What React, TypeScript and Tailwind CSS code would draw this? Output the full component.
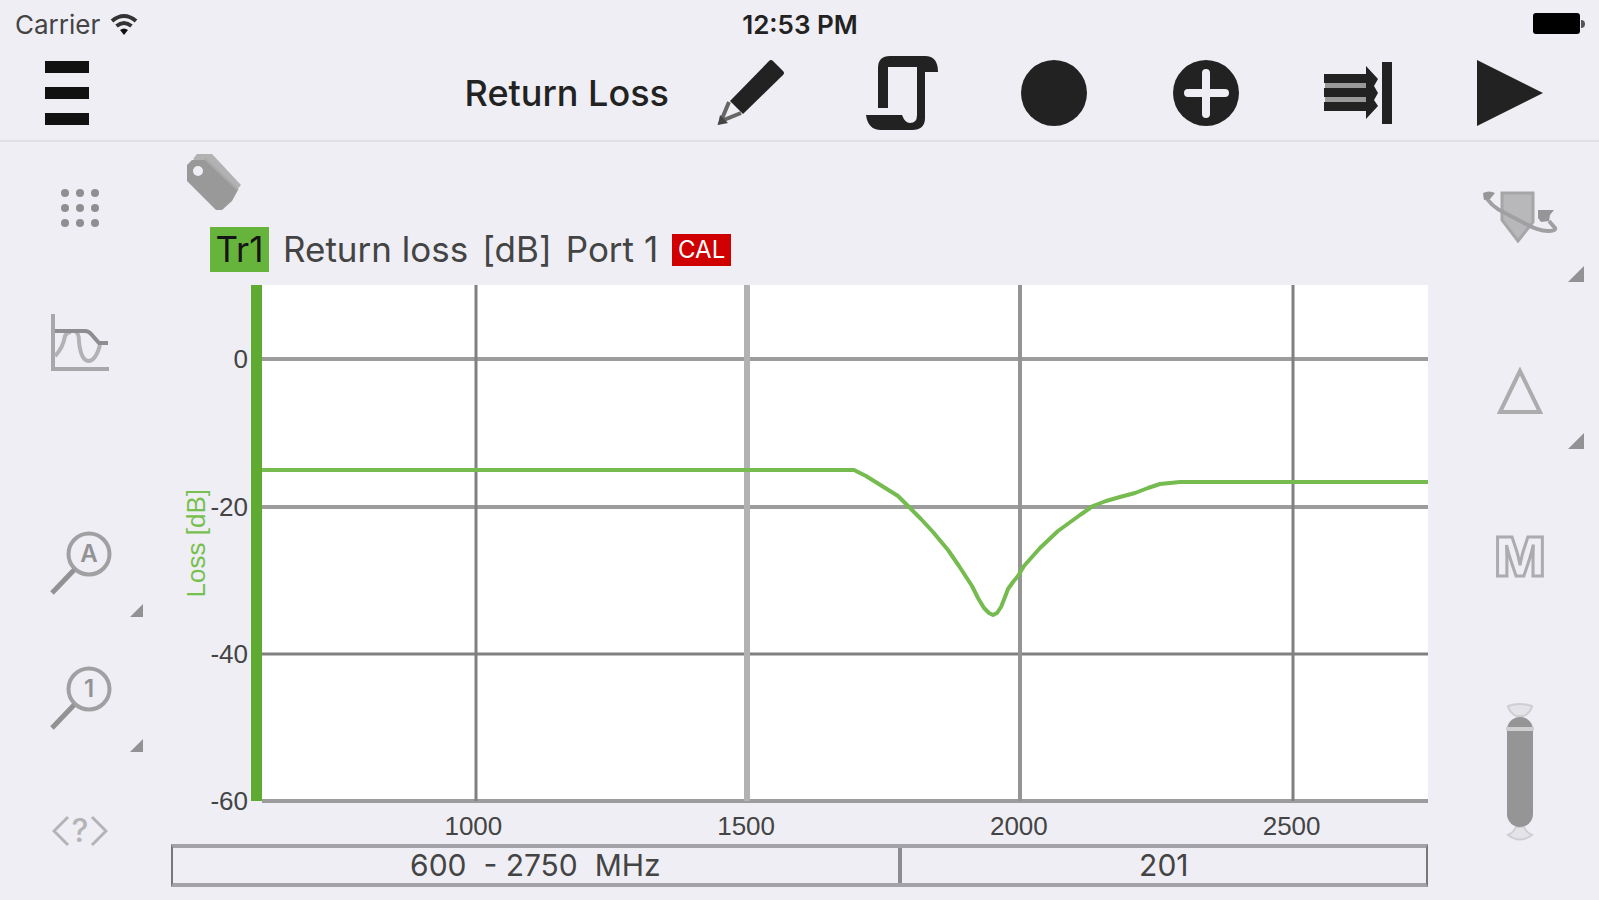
import type { ReactNode } from 'react'

const yTicks = ['0', '-20', '-40', '-60']
const xTicks = ['1000', '1500', '2000', '2500']

const trace =
  '0,185 592,185 604,191 620,201 636,211 646,221 659,234 671,247 686,265 697,281 710,301 716,313 722,323 727,328 731,330 735,328 739,322 743,312 746,304 751,297 756,291 762,281 778,263 796,246 818,230 831,221 844,216 858,212 873,208 886,203 898,199 918,197 1166,197'

function ToolButton({ label, children }: { label: string; children: ReactNode }) {
  return (
    <button aria-label={label} className="flex h-20 w-[152px] items-center justify-center text-[#222]">
      {children}
    </button>
  )
}

function Corner({ className }: { className: string }) {
  return (
    <svg viewBox="0 0 16 16" className={className}>
      <path d="M16 0v16H0z" fill="#929294" />
    </svg>
  )
}

function StatusBar() {
  return (
    <div className="grid h-12 grid-cols-3 items-center pl-[15px] pr-[14px]">
      <div className="flex items-center gap-[10px] text-[26px] text-[#444]">
        <span>Carrier</span>
        <svg width="28" height="22" viewBox="0 0 28 22">
          <path d="M14 22l-4-5q4-3 8 0z" fill="#111" />
          <path d="M6.500 13q7.500-6 15 0M2 8q12-10 24 0" fill="none" stroke="#333" strokeWidth="4" />
        </svg>
      </div>
      <div className="text-center text-[26px] font-semibold text-[#222]">12:53 PM</div>
      <svg width="52" height="22" viewBox="0 0 52 22" className="justify-self-end">
        <rect width="47" height="21" rx="3" fill="#000" />
        <path d="M48 7q4 0 4 4t-4 4z" fill="#555" />
      </svg>
    </div>
  )
}

function Toolbar() {
  return (
    <header className="flex h-[94px] items-center justify-between border-b-2 border-[#e0dfe5] pb-[2px] pl-[45px] pr-[13px]">
      <button aria-label="Menu" className="flex flex-col gap-[14px]">
        <span className="h-3 w-11 bg-[#111]" />
        <span className="h-3 w-11 bg-[#111]" />
        <span className="h-3 w-11 bg-[#111]" />
      </button>
      <div className="flex items-center">
        <h1 className="mr-[5px] text-[36px] font-medium text-[#222]">Return Loss</h1>
        <ToolButton label="Edit">
          <svg width="68" height="68" viewBox="0 0 68 68">
            <path d="M14 42L53 2q2-2 4 0l10 10q2 2 0 4L27 55z" fill="currentColor" />
            <path d="M13 43L5 62l20-8" fill="none" stroke="#666" strokeWidth="4" />
            <path d="M4 56l-2 10 10-2z" fill="#444" />
          </svg>
        </ToolButton>
        <ToolButton label="Script">
          <svg width="74" height="76" viewBox="0 0 74 76">
            <path
              d="M13 53V13Q13 1 25 1H60Q73 1 73 17H60V63Q60 75 47 75H16Q3 75 1 60H37Q40 68 45 68Q52 68 52 60V12H23V53z"
              fill="currentColor"
            />
          </svg>
        </ToolButton>
        <ToolButton label="Record">
          <svg width="66" height="66" viewBox="0 0 66 66">
            <circle cx="33" cy="33" r="33" fill="currentColor" />
          </svg>
        </ToolButton>
        <ToolButton label="Add">
          <svg width="66" height="66" viewBox="0 0 66 66">
            <circle cx="33" cy="33" r="33" fill="currentColor" />
            <path d="M33 13v41M15 33h37" stroke="#efeef4" strokeWidth="8" strokeLinecap="round" />
          </svg>
        </ToolButton>
        <ToolButton label="Skip to end">
          <svg width="70" height="62" viewBox="0 0 70 62">
            <path d="M2 14h42v32H2z" fill="#999" />
            <path d="M1 12h42v9H1zM1 26h42v9H1zM1 40h42v9H1z" fill="currentColor" />
            <path d="M43 4l12 13-4 7 4 7-4 7 4 6-12 13z" fill="currentColor" />
            <path d="M59 0h10v62H59z" fill="currentColor" />
          </svg>
        </ToolButton>
        <ToolButton label="Run">
          <svg width="68" height="68" viewBox="0 0 68 68">
            <path d="M1 1l66 33L1 67z" fill="currentColor" />
          </svg>
        </ToolButton>
      </div>
    </header>
  )
}

function LeftRail() {
  return (
    <nav className="flex w-[171px] shrink-0 flex-col justify-between">
      <div className="flex flex-col">
        <button aria-label="Grid" className="flex h-[132px] items-center pl-[61px]">
          <svg width="38" height="38" viewBox="0 0 38 38" fill="#8f8f91">
            {[4, 19, 34].map((y) =>
              [4, 19, 34].map((x) => <circle key={`${x}-${y}`} cx={x} cy={y} r="4" />),
            )}
          </svg>
        </button>
        <button aria-label="Traces" className="flex h-[138px] items-center pl-[51px]">
          <svg width="58" height="58" viewBox="0 0 58 58" fill="none">
            <path d="M2 0v55h56" stroke="#a8a8aa" strokeWidth="4" />
            <path d="M4 42Q12 34 14 22Q16 18 20 18M24 18Q28 18 28 28Q30 47 38 47Q45 46 49 31" stroke="#b2b2b4" strokeWidth="4" />
            <path d="M4 17h30q4 0 7 4l7 8h9" stroke="#8e8e90" strokeWidth="4" />
          </svg>
        </button>
      </div>
      <div className="flex flex-col">
        {['A', '1'].map((mark) => (
          <button key={mark} aria-label={`Zoom ${mark}`} className="relative flex h-[135px] items-center pl-[50px]">
            <svg width="62" height="64" viewBox="0 0 62 64">
              <circle cx="39" cy="23" r="20.5" fill="none" stroke="#a0a0a2" strokeWidth="4" />
              <path d="M24 39L2 62" stroke="#929294" strokeWidth="5" />
              <text x="39" y="31" textAnchor="middle" fontSize="24" fontWeight="600" fill="#929294">
                {mark}
              </text>
            </svg>
            <Corner className="absolute bottom-[13px] right-[28px] size-[13px]" />
          </button>
        ))}
        <button aria-label="Help" className="flex h-[135px] items-center pl-[52px]">
          <svg width="56" height="44" viewBox="0 0 56 44">
            <path d="M16 6L2 20l14 14M40 6l14 14-14 14" fill="none" stroke="#b4b4b7" strokeWidth="3" />
            <text x="28" y="31" textAnchor="middle" fontSize="32" fontWeight="500" fill="#b4b4b7">
              ?
            </text>
          </svg>
        </button>
      </div>
    </nav>
  )
}

function RightRail() {
  return (
    <nav className="flex w-[171px] shrink-0 flex-col gap-[30px]">
      <button aria-label="Rotate marker" className="relative flex h-[150px] items-center justify-center pl-[12px]">
        <svg width="76" height="52" viewBox="0 0 76 52">
          <path d="M20 2h31v29L36 50 20 29z" fill="#b8b8ba" stroke="#a6a6a8" strokeWidth="3" />
          <path d="M3 4Q8 15 23 22L42 32Q56 40 66 40Q74 40 73 37L67 30" fill="none" stroke="#a0a0a2" strokeWidth="4" />
          <path d="M56 19h16l-4 5-1 6-8 1-3-4z" fill="#969698" />
          <path d="M1 2q6-3 12 0l-5 6-6 1z" fill="#969698" />
        </svg>
        <Corner className="absolute bottom-[10px] right-[15px] size-4" />
      </button>
      <button aria-label="Delta" className="relative flex h-[136px] items-center justify-center pl-[12px]">
        <svg width="48" height="48" viewBox="0 0 48 48">
          <path d="M24 5L4 46h40z" fill="none" stroke="#acacae" strokeWidth="4" />
        </svg>
        <Corner className="absolute bottom-[9px] right-[15px] size-4" />
      </button>
      <button aria-label="Marker" className="flex h-[136px] items-center justify-center pl-[12px]">
        <svg width="60" height="72" viewBox="0 0 60 72">
          <text x="30" y="56" textAnchor="middle" fontSize="54" fontWeight="800" fill="none" stroke="#acacae" strokeWidth="3">
            M
          </text>
        </svg>
      </button>
      <button aria-label="Scroll" className="mb-[59px] mt-auto flex items-center justify-center pl-[12px]">
        <svg width="28" height="138" viewBox="0 0 28 138">
          <path d="M2 3q12-4 24 0-1 6-8 10h-8Q3 9 2 3zM10 124h8q2 5 8 8-12 9-24 0 6-3 8-8z" fill="#e4e3e8" stroke="#cfced3" strokeWidth="2" />
          <rect x="1" y="14" width="26" height="110" rx="13" fill="#959595" />
          <path d="M0 26h28" stroke="#cfcfd1" strokeWidth="4" />
        </svg>
      </button>
    </nav>
  )
}

function Chart() {
  return (
    <div className="flex flex-1 flex-col font-['Liberation_Sans',sans-serif] text-[26px] leading-[26px] text-[#444]">
      <div className="flex flex-1">
        <div className="flex w-[38px] items-center justify-end">
          <span className="rotate-180 whitespace-nowrap text-[#76c04f] [writing-mode:vertical-rl]">Loss [dB]</span>
        </div>
        <div className="grid w-[42px] grid-rows-[74fr_148fr_147fr_147fr]">
          {yTicks.map((tick) => (
            <div key={tick} className="flex items-end justify-end pr-[3px]">
              <span className="translate-y-1/2">{tick}</span>
            </div>
          ))}
        </div>
        <div className="flex flex-1 border-l-[11px] border-[#5faa30] bg-white">
          <svg viewBox="0 0 1166 516" preserveAspectRatio="none" className="h-0 min-h-full w-full overflow-visible" fill="none">
            <path d="M0 222H1166M0 516H1166M0 74H1166" stroke="#9c9c9c" strokeWidth="4" />
            <path d="M0 369H1166M214 0V516M1031 0V516" stroke="#808080" strokeWidth="3" />
            <path d="M758 0V516" stroke="#949494" strokeWidth="4" />
            <path d="M485 0V516" stroke="#b2b2b2" strokeWidth="6" />
            <polyline points={trace} stroke="#75bb50" strokeWidth="4" strokeLinejoin="round" />
          </svg>
        </div>
      </div>
      <div className="grid h-[43px] grid-cols-4 items-center pl-[166px] pt-[6px] text-center">
        {xTicks.map((tick) => (
          <span key={tick}>{tick}</span>
        ))}
      </div>
    </div>
  )
}

export default function App() {
  return (
    <div className="flex min-h-screen flex-col bg-[#efeef4] font-['Inter',sans-serif]">
      <StatusBar />
      <Toolbar />
      <div className="flex flex-1">
        <LeftRail />
        <main className="flex flex-1 flex-col pb-[13px]">
          <div className="h-[85px] pl-4 pt-3">
            <button aria-label="Tag" className="block">
              <svg width="54" height="56" viewBox="0 0 54 56">
                <path d="M6 5l4-5h15l29 31-5 6z" fill="#b2b2b3" />
                <path d="M0 11l5-5h13l33 30-6 11-10 9h-6L0 27z" fill="#999" />
                <path d="M18 5l33 31" stroke="#a8a8a8" strokeWidth="2" />
                <circle cx="11" cy="17" r="5" fill="#efeef4" />
              </svg>
            </button>
          </div>
          <div className="mb-[13px] flex h-[45px] items-center pl-[39px] text-[35px] leading-[45px] text-[#444]">
            <span className="w-[59px] bg-[#67b43d] text-center text-[#151515]">Tr1</span>
            <span className="ml-[14px]">Return loss</span>
            <span className="ml-[14px]">[dB]</span>
            <span className="ml-[14px]">Port 1</span>
            <span className="ml-[14px] flex h-8 w-[59px] items-center justify-center bg-[#d00000] text-[24px] text-white">CAL</span>
          </div>
          <Chart />
          <div className="flex h-[43px] border-x-2 border-y-4 border-x-[#777] border-y-[#a3a2a8] text-[30px] leading-[35px] text-[#444]">
            <button className="flex-[727] whitespace-pre border-r-4 border-[#8c8c90]">600  - 2750  MHz</button>
            <button className="flex-[526]">201</button>
          </div>
        </main>
        <RightRail />
      </div>
    </div>
  )
}
